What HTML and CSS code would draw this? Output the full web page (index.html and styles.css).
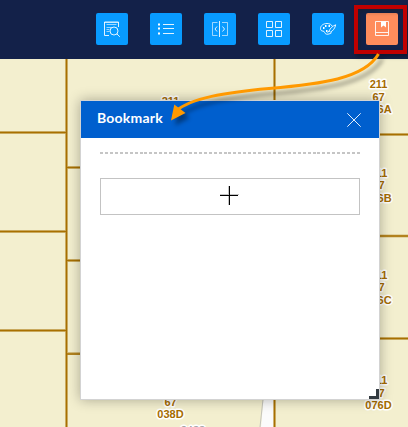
FILE: index.html
```html
<!DOCTYPE html>
<html lang="en">
<head>
<meta charset="utf-8">
<title>Bookmark</title>
<link rel="stylesheet" href="styles.css">
</head>
<body>
<div class="app">
  <header class="toolbar">
    <button class="tool" aria-label="Query"><svg width="18" height="18" viewBox="0 0 18 18"><path d="M6 15.500H1.500V2h14v5"/><path class="soft" d="M1 2.500h14M3.500 4.500h10M3.500 7.500h5M3.500 9.500h3M3.500 11.500h3"/><circle cx="11" cy="11" r="4"/><path d="M13.800 13.800l3 3"/></svg></button>
    <button class="tool" aria-label="Legend"><svg width="18" height="18" viewBox="0 0 18 18"><path class="list" d="M6 4.500h11M6 8.500h11M6 13.500h11"/><path class="dots" d="M1 4.500h2M1 8.500h2M1 13.500h2"/></svg></button>
    <button class="tool" aria-label="Swipe"><svg width="18" height="18" viewBox="0 0 18 18"><path d="M8.500 1v16"/><path class="soft" d="M6.500 2.500h-5v13h5M11 2.500h5.500v13H11"/><path d="M6 6.500L4 9 6 11.500M11.500 6.500L13.500 9 11.500 11.500"/></svg></button>
    <button class="tool" aria-label="Basemap gallery"><svg width="18" height="18" viewBox="0 0 18 18"><path d="M1.500 1.500h6v6h-6zM10.500 1.500h6v6h-6zM1.500 10.500h6v6h-6zM10.500 10.500h6v6h-6z"/></svg></button>
    <button class="tool" aria-label="Draw"><svg width="18" height="18" viewBox="0 0 18 18"><path d="M13.200 6.200C12.500 4.400 10.500 3.500 8 3.500c-3.900 0-6.500 2.300-6.500 5 0 1.700 1 2.600 2.400 2.600.9 0 1.400.4 1.700 1.300.5 1.500 1.700 2 3.400 1.800 1.500-.2 2.800-.8 3.700-1.600"/><path d="M16.700 4.800c-2.800 1-5.600 3.500-6.600 6.200l1.300 1.100c2.500-1 4.800-4.200 5.300-7.300zM10 11l-1.500 1.700"/><path class="dots" d="M4 8h1.500M6 6h1.500M9.500 6H11M7 11h1.500"/></svg></button>
    <button class="tool active" aria-label="Bookmark"><svg width="18" height="18" viewBox="0 0 18 18"><path d="M2.500 1.500h13v14h-13z"/><path d="M2.500 12.500h13"/><path class="ribbon" d="M8 1.500h5v6L10.500 5.500 8 7.500z"/></svg></button>
  </header>
  <main class="map">
    <svg class="parcels" width="408" height="368" viewBox="0 59 408 368">
      <path class="road" d="M267 360L261 427H274V360z"/>
      <path class="road-edge" d="M264 390L260 427"/>
      <path class="line-halo" d="M66.500 59V427M274.500 59V427M0 132.500H66M0 231.500H66M0 330.500H66M67 167.500H82M67 260.500H82M67 353.500H82M378 134.500H408M378 236H408M378 338.500H408"/>
      <path class="line" d="M66.500 59V427M274.500 59V427M0 132.500H66M0 231.500H66M0 330.500H66M67 167.500H82M67 260.500H82M67 354H82M378 134.500H408M378 236H408M378 338.500H408"/>
      <g class="labels">
        <text x="170.500" y="104.500">211</text>
        <text x="170.500" y="406">67</text><text x="170.500" y="418">038D</text>
        <text x="378.500" y="88">211</text><text x="378.500" y="100.500">67</text><text x="378.500" y="113">076A</text>
        <text x="378.500" y="177">211</text><text x="378.500" y="189">67</text><text x="378.500" y="201.500">076B</text>
        <text x="378.500" y="279">211</text><text x="378.500" y="291">67</text><text x="378.500" y="303.500">076C</text>
        <text x="378.500" y="384">211</text><text x="378.500" y="396.500">67</text><text x="378.500" y="409">076D</text>
        <text class="street" x="193" y="434">2433</text>
      </g>
    </svg>
  </main>
  <section class="panel">
    <div class="panel-head">
      <h1>Bookmark</h1>
      <svg class="close" width="14" height="14" viewBox="0 0 14 14"><path d="M.3 .3L13.700 13.700M13.700 .3L.3 13.700"/></svg>
    </div>
    <div class="panel-body">
      <div class="rule"></div>
      <button class="add" aria-label="Add bookmark"><svg width="20" height="20" viewBox="0 0 20 20"><path class="shade" d="M1 9.500h19M9.500 1v19"/><path d="M1 10.500h18M10.500 1v19"/></svg></button>
    </div>
    <span class="resize"></span>
  </section>
  <div class="highlight"></div>
  <svg class="arrow" width="408" height="427" viewBox="0 0 408 427">
    <path d="M378.500 54C364 79 320 84 269 88.500C225 92.500 191 98 176 111"/>
    <path class="tip" d="M171 120.500L174.300 104.500L185.500 113z"/>
  </svg>
</div>
</body>
</html>
```
FILE: styles.css
```css
* { box-sizing: border-box; }

body { margin: 0; font-family: Lato, "Liberation Sans", sans-serif; }

.app {
  position: relative;
  display: flex;
  flex-direction: column;
  width: 408px;
  height: 427px;
  overflow: hidden;
}

.toolbar {
  display: flex;
  gap: 22px;
  flex: 0 0 59px;
  padding: 13px 10px 0 96px;
  background: #132149;
}

.tool {
  display: flex;
  align-items: center;
  justify-content: center;
  flex: 0 0 32px;
  height: 32px;
  padding: 0;
  border: 0;
  border-radius: 2px;
  background: #089bff;
}

.tool.active { background: #ff8c5c; }
.tool svg { fill: none; stroke: #fff; stroke-width: 1; stroke-opacity: .88; }
.tool .soft { stroke-opacity: .6; }
.tool .dots { stroke-width: 2; stroke-opacity: 1; }
.tool .ribbon { fill: #fff; stroke: none; }

.map { flex: 1; background: #f3efcf; }
.parcels { display: block; }
.line, .line-halo { fill: none; stroke: #a87000; stroke-width: 1.400; }
.line-halo { stroke-width: 3; stroke-opacity: .4; }
.road { fill: #fbfbfb; }
.road-edge { stroke: #c4c4bc; stroke-width: 1; }

.labels {
  font: bold 11px "Liberation Sans", sans-serif;
  text-anchor: middle;
  fill: #a66c00;
  stroke: #fff;
  stroke-width: 3px;
  stroke-linejoin: round;
  paint-order: stroke;
}
.labels .street { fill: #999; font-weight: normal; }

.panel {
  position: absolute;
  left: 80px;
  top: 100px;
  width: 300px;
  height: 300px;
  border: 1px solid #d3d3d3;
  background: #fff;
  box-shadow: 0 0 12px rgba(0, 0, 0, .3);
}

.panel-head {
  display: flex;
  align-items: center;
  justify-content: space-between;
  height: 37px;
  padding: 0 18px 0 16px;
  background: #005fce;
}
.panel-head h1 {
  margin: 0 0 3px;
  color: #fff;
  font-size: 14px;
  font-weight: 700;
  letter-spacing: .2px;
  line-height: 18px;
}
.close { margin-top: 1px; stroke: #fff; stroke-width: .9; }

.panel-body { padding: 14px 19px 0; }
.rule {
  height: 2px;
  background: repeating-linear-gradient(to right, #c5c5c5 0 3px, transparent 3px 4.942px);
}
.add {
  display: flex;
  align-items: center;
  justify-content: center;
  width: 100%;
  height: 37px;
  margin-top: 24px;
  padding: 0 2px 3px 0;
  border: 1px solid #c3c3c3;
  background: #fff;
}
.add svg { stroke: #000; stroke-width: 1; }
.add .shade { stroke: #c4c4c4; }

.resize {
  position: absolute;
  right: 0;
  bottom: 0;
  width: 10px;
  height: 10px;
  border: solid #333a40;
  border-width: 0 3px 3px 0;
}

.highlight {
  position: absolute;
  left: 354px;
  top: 5px;
  width: 53px;
  height: 49px;
  border: 4px solid #c00000;
  box-shadow: inset 2px 3px 4px rgba(30, 30, 30, .4), 2px 3px 4px rgba(0, 0, 0, .3);
}

.arrow {
  position: absolute;
  left: 0;
  top: 0;
  fill: none;
  stroke: #ff9900;
  stroke-width: 3;
  filter: drop-shadow(4px 5px 2px rgba(0, 0, 0, .38));
}
.arrow .tip { fill: #ff9900; stroke: none; }
```
